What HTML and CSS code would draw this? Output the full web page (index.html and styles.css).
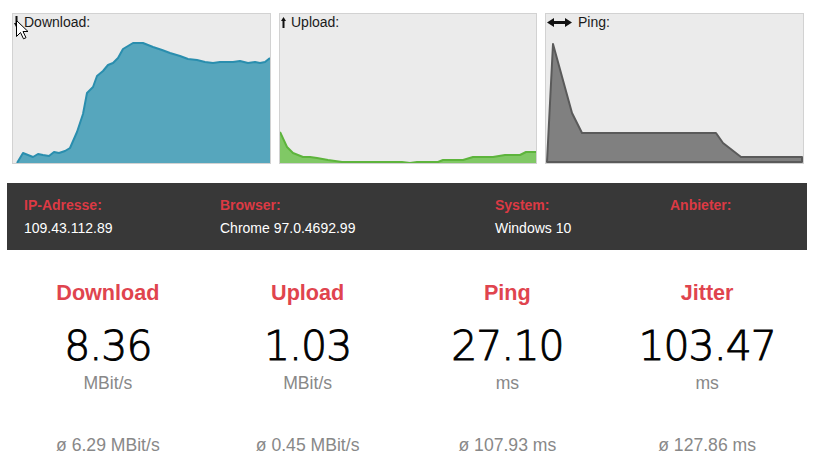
FILE: index.html
```html
<!DOCTYPE html>
<html lang="de">
<head>
<meta charset="utf-8">
<title>Speedtest</title>
<link rel="stylesheet" href="styles.css">
</head>
<body>
<div class="page">
  <div class="charts">
    <div class="chart chart-wide">
      <div class="chart-label">
        <svg class="icon icon-down" width="5" height="12" viewBox="0 0 5 12"><rect x="1.5" y="0" width="2" height="8" fill="#111"/><polygon points="0,7 5,7 2.5,12" fill="#111"/></svg>
        <span>Download:</span>
      </div>
      <svg class="plot" width="257" height="149" viewBox="0 0 257 149">
        <polygon fill="#56a6bd" points="4,149 10,139 15,141 20,143 25,140 30,141 36,142 41,138 46,139 52,137 57,134 64,118 70,100 74,79 80,73 84,62 90,57 95,51 100,49 105,44 110,35 115,32 120,29 130,29 140,33 149,36 157,39 167,42 175,45 184,46 192,48 200,49 207,48 220,48 227,47 235,49 242,48 247,49 252,48 256,44 257,44 257,149"/>
        <polyline fill="none" stroke="#2a8eae" stroke-width="2" stroke-linejoin="round" points="4,149 10,139 15,141 20,143 25,140 30,141 36,142 41,138 46,139 52,137 57,134 64,118 70,100 74,79 80,73 84,62 90,57 95,51 100,49 105,44 110,35 115,32 120,29 130,29 140,33 149,36 157,39 167,42 175,45 184,46 192,48 200,49 207,48 220,48 227,47 235,49 242,48 247,49 252,48 257,44"/>
      </svg>
    </div>
    <div class="chart chart-narrow">
      <div class="chart-label">
        <svg class="icon icon-up" width="5" height="11" viewBox="0 0 5 11"><rect x="1.5" y="3" width="2" height="8" fill="#111"/><polygon points="0,4 5,4 2.5,0" fill="#111"/></svg>
        <span>Upload:</span>
      </div>
      <svg class="plot" width="256" height="149" viewBox="0 0 256 149">
        <polygon fill="#80c865" points="0,118 7,133 13,139 23,143 30,143 37,144 48,146 62,148 122,148 130,149 137,148 158,148 163,146 183,146 193,143 213,143 225,141 240,141 246,138 256,138 256,149 0,149"/>
        <polyline fill="none" stroke="#5db43c" stroke-width="2" stroke-linejoin="round" points="0,118 7,133 13,139 23,143 30,143 37,144 48,146 62,148 122,148 130,149 137,148 158,148 163,146 183,146 193,143 213,143 225,141 240,141 246,138 256,138"/>
      </svg>
    </div>
    <div class="chart chart-wide">
      <div class="chart-label">
        <svg class="icon icon-ping" width="25" height="9" viewBox="0 0 25 9"><polygon points="0,4.5 7,0 7,3 18,3 18,0 25,4.5 18,9 18,6 7,6 7,9" fill="#111"/></svg>
        <span>Ping:</span>
      </div>
      <svg class="plot" width="257" height="149" viewBox="0 0 257 149">
        <polygon fill="#808080" stroke="#5a5a5a" stroke-width="2" stroke-linejoin="round" points="1,148 7,30 26,99 36,119 170,119 177,129 195,143 256,143 256,148"/>
      </svg>
    </div>
  </div>

  <div class="info">
    <div class="info-col">
      <div class="info-label">IP-Adresse:</div>
      <div class="info-value">109.43.112.89</div>
    </div>
    <div class="info-col">
      <div class="info-label">Browser:</div>
      <div class="info-value">Chrome 97.0.4692.99</div>
    </div>
    <div class="info-col">
      <div class="info-label">System:</div>
      <div class="info-value">Windows 10</div>
    </div>
    <div class="info-col">
      <div class="info-label">Anbieter:</div>
      <div class="info-value"></div>
    </div>
  </div>

  <div class="stats">
    <div class="stat">
      <div class="stat-title">Download</div>
      <div class="stat-value">8.36</div>
      <div class="stat-unit">MBit/s</div>
      <div class="stat-avg">ø 6.29 MBit/s</div>
    </div>
    <div class="stat">
      <div class="stat-title">Upload</div>
      <div class="stat-value">1.03</div>
      <div class="stat-unit">MBit/s</div>
      <div class="stat-avg">ø 0.45 MBit/s</div>
    </div>
    <div class="stat">
      <div class="stat-title">Ping</div>
      <div class="stat-value">27.10</div>
      <div class="stat-unit">ms</div>
      <div class="stat-avg">ø 107.93 ms</div>
    </div>
    <div class="stat">
      <div class="stat-title">Jitter</div>
      <div class="stat-value">103.47</div>
      <div class="stat-unit">ms</div>
      <div class="stat-avg">ø 127.86 ms</div>
    </div>
  </div>
</div>

<svg class="cursor" width="13" height="20" viewBox="0 0 13 20">
  <path d="M0.5,0.5 L0.5,16.5 L4.5,12.5 L7.5,18.8 L10,17.7 L7,11.5 L12,11.5 Z" fill="#fff" stroke="#000" stroke-width="1" stroke-linejoin="miter"/>
</svg>
</body>
</html>
```

FILE: styles.css
```css
html, body {
  margin: 0;
  padding: 0;
  background: #ffffff;
}

body {
  font-family: "Liberation Sans", Arial, sans-serif;
  color: #222;
}

.page {
  padding: 13px 0 0 7px;
  width: 800px;
}

.charts {
  display: flex;
  gap: 8px;
  margin-left: 5px;
}

.chart {
  position: relative;
  box-sizing: border-box;
  height: 151px;
  background: #ebebeb;
  border: 1px solid #d2d2d2;
}

.chart-wide {
  width: 259px;
}

.chart-narrow {
  width: 258px;
}

.plot {
  display: block;
}

.chart-label {
  position: absolute;
  top: 0;
  left: 1px;
  display: flex;
  align-items: center;
  font-size: 14px;
  line-height: 16px;
  color: #1a1a1a;
}

.icon {
  display: block;
  flex: none;
}

.icon-down {
  margin-right: 5px;
}

.icon-up {
  margin-right: 5px;
}

.icon-ping {
  margin-right: 6px;
}

.info {
  box-sizing: border-box;
  margin-top: 19px;
  width: 800px;
  height: 67px;
  background: #383838;
  padding: 14px 0 0 17px;
  display: grid;
  grid-template-columns: 196px 275px 175px 1fr;
}

.info-label {
  font-size: 14px;
  line-height: 16px;
  font-weight: bold;
  color: #dc3a44;
}

.info-value {
  margin-top: 7px;
  font-size: 14px;
  line-height: 16px;
  color: #ffffff;
  min-height: 16px;
}

.stats {
  display: flex;
  margin-left: 1px;
  padding-top: 30px;
}

.stat {
  width: 200px;
  text-align: center;
}

.stat-title {
  font-size: 21.6px;
  line-height: 25px;
  font-weight: bold;
  color: #e0444e;
}

.stat-value {
  margin-top: 17px;
  font-family: "DejaVu Sans", sans-serif;
  font-weight: 200;
  font-size: 41px;
  line-height: 48px;
  letter-spacing: -1px;
  color: #000;
  -webkit-text-stroke: 0.9px #000;
}

.stat-unit {
  margin-top: 3px;
  font-size: 17.6px;
  line-height: 20px;
  color: #888888;
}

.stat-avg {
  margin-top: 42px;
  font-size: 17.6px;
  line-height: 20px;
  color: #888888;
}

.cursor {
  position: absolute;
  left: 16px;
  top: 20px;
}
```
